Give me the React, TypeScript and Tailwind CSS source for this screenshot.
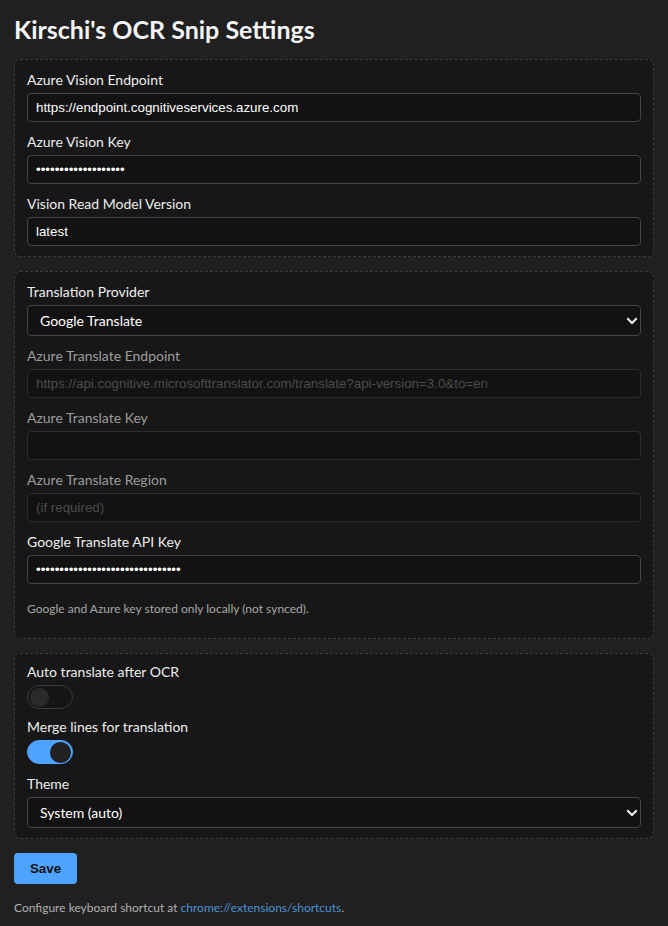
import { useState } from 'react'

const ui = "font-['Lato','Noto_Sans',sans-serif]"
const inputFont = "font-['Liberation_Sans',Arial,sans-serif]"

type FieldProps = {
  label: string
  value?: string
  placeholder?: string
  type?: string
  disabled?: boolean
}

function Field({ label, value, placeholder, type = 'text', disabled }: FieldProps) {
  return (
    <label className="flex flex-col">
      <span className={`h-5 leading-5 text-sm ${disabled ? 'text-[#9c9c9c]' : 'text-[#eeeeee]'}`}>{label}</span>
      <input
        type={type}
        defaultValue={value}
        placeholder={placeholder}
        disabled={disabled}
        className={`mt-[3px] h-[29px] w-full rounded-[4px] border bg-[#121212] px-2 text-[13.33px] outline-none ${inputFont} ${
          disabled
            ? 'border-[#2c2c2c] text-[#5c5c5c] placeholder:text-[#4c4c4c]'
            : 'border-[#454545] text-white'
        }`}
      />
    </label>
  )
}

function Select({ label, options }: { label: string; options: string[] }) {
  return (
    <label className="flex flex-col">
      <span className="h-5 leading-5 text-sm text-[#eeeeee]">{label}</span>
      <div className="relative mt-[3px]">
        <select className={`h-[31px] w-full appearance-none rounded-[4px] border border-[#454545] bg-[#121212] pl-3 pr-8 text-sm text-white outline-none ${ui}`}>
          {options.map((o) => (
            <option key={o}>{o}</option>
          ))}
        </select>
        <svg
          className="pointer-events-none absolute right-[4px] top-1/2 -translate-y-1/2"
          width="10"
          height="8"
          viewBox="0 0 10 8"
          fill="none"
        >
          <path d="M1 2l4 4 4-4" stroke="#f0f0f0" strokeWidth="2" strokeLinecap="square" />
        </svg>
      </div>
    </label>
  )
}

function Toggle({ label, initial, className = '' }: { label: string; initial: boolean; className?: string }) {
  const [on, setOn] = useState(initial)
  return (
    <div className={`flex flex-col ${className}`}>
      <span className="h-5 leading-5 text-sm text-[#eeeeee]">{label}</span>
      <button
        type="button"
        onClick={() => setOn(!on)}
        className={`mt-[3px] flex h-6 w-[46px] items-center rounded-full border px-[2px] ${
          on ? 'justify-end border-[#4da3ff] bg-[#4da3ff]' : 'justify-start border-[#3a3a3a] bg-[#151515]'
        }`}
      >
        <span className={`h-[19px] w-[19px] rounded-full ${on ? 'bg-[#222222] ring-1 ring-[#1a1a1a]' : 'bg-[#2a2a2a]'}`} />
      </button>
    </div>
  )
}

function Card({ children, className = 'py-[10px]' }: { children: React.ReactNode; className?: string }) {
  return (
    <section className={`flex flex-col gap-[10px] rounded-[6px] border border-dashed border-[#3c3c3c] bg-[#171717] px-3 ${className}`}>
      {children}
    </section>
  )
}

export default function App() {
  return (
    <div className={`min-h-[926px] bg-[#202020] px-[14px] pb-4 pt-[14px] text-[#eeeeee] ${ui}`}>
      <h1 className="mb-[14px] h-[31px] text-[25px] font-bold leading-[31px] text-[#f4f4f4]">
        Kirschi's OCR Snip Settings
      </h1>

      <div className="flex flex-col gap-[14px]">
        <Card>
          <Field label="Azure Vision Endpoint" value="https://endpoint.cognitiveservices.azure.com" />
          <Field label="Azure Vision Key" type="password" value="abcdefghijklmnopqrs" />
          <Field label="Vision Read Model Version" value="latest" />
        </Card>

        <Card>
          <Select label="Translation Provider" options={['Google Translate', 'Azure Translator', 'None']} />
          <Field
            label="Azure Translate Endpoint"
            placeholder="https://api.cognitive.microsofttranslator.com/translate?api-version=3.0&to=en"
            disabled
          />
          <Field label="Azure Translate Key" disabled />
          <Field label="Azure Translate Region" placeholder="(if required)" disabled />
          <Field label="Google Translate API Key" type="password" value="abcdefghijklmnopqrstuvwxyzabcde" />
          <p className="pb-[11px] pt-[7px] text-xs leading-4 text-[#a8a8a8]">
            Google and Azure key stored only locally (not synced).
          </p>
        </Card>

        <Card className="pb-[10px] pt-[8px]">
          <Toggle label="Auto translate after OCR" initial={false} className="-mb-[2px]" />
          <Toggle label="Merge lines for translation" initial={true} />
          <Select label="Theme" options={['System (auto)', 'Light', 'Dark']} />
        </Card>
      </div>

      <button
        type="button"
        className={`mt-[14px] h-[31px] w-[63px] rounded-[4px] bg-[#4da3ff] text-[13.33px] font-bold text-[#111111] ${inputFont}`}
      >
        Save
      </button>

      <p className="mt-4 text-xs text-[#b0b0b0]">
        Configure keyboard shortcut at{' '}
        <a href="#" className="text-[#4b93d6]">
          chrome://extensions/shortcuts
        </a>
        .
      </p>
    </div>
  )
}
